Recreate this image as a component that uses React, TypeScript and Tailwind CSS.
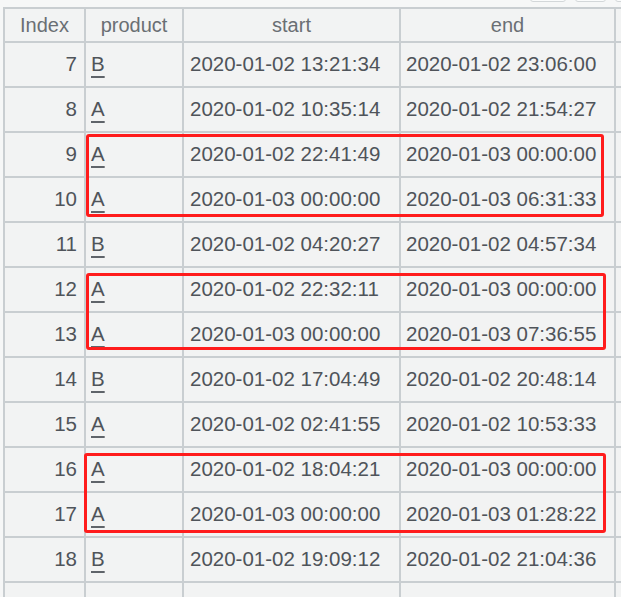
import React from "react";

const rows: [string, string, string, string][] = [
  ["7", "B", "2020-01-02 13:21:34", "2020-01-02 23:06:00"],
  ["8", "A", "2020-01-02 10:35:14", "2020-01-02 21:54:27"],
  ["9", "A", "2020-01-02 22:41:49", "2020-01-03 00:00:00"],
  ["10", "A", "2020-01-03 00:00:00", "2020-01-03 06:31:33"],
  ["11", "B", "2020-01-02 04:20:27", "2020-01-02 04:57:34"],
  ["12", "A", "2020-01-02 22:32:11", "2020-01-03 00:00:00"],
  ["13", "A", "2020-01-03 00:00:00", "2020-01-03 07:36:55"],
  ["14", "B", "2020-01-02 17:04:49", "2020-01-02 20:48:14"],
  ["15", "A", "2020-01-02 02:41:55", "2020-01-02 10:53:33"],
  ["16", "A", "2020-01-02 18:04:21", "2020-01-03 00:00:00"],
  ["17", "A", "2020-01-03 00:00:00", "2020-01-03 01:28:22"],
  ["18", "B", "2020-01-02 19:09:12", "2020-01-02 21:04:36"],
  ["19", "A", "2020-01-02 05:26:07", "2020-01-02 08:15:30"],
];

const cell = "bg-[#f2f3f3] flex items-center h-[43px] text-[20.5px] text-[#4f545a] leading-none whitespace-nowrap overflow-hidden";
const head = "bg-[#f2f3f3] flex items-center justify-center h-[32px] text-[20px] text-[#6a6f74] leading-none whitespace-nowrap";

export default function App() {
  return (
    <div
      className="relative w-[621px] h-[597px] overflow-hidden bg-[#f6f7f7]"
      style={{ fontFamily: '"Liberation Sans", Arial, sans-serif' }}
    >
      {/* toolbar buttons cut off at top */}
      <div className="absolute top-[-12px] left-[530px] flex gap-[9px]">
        <div className="w-[36px] h-[14px] rounded-[3px] border border-[#d3d7d9] bg-[#fafbfb]" />
        <div className="w-[31px] h-[14px] rounded-[3px] border border-[#d3d7d9] bg-[#fafbfb]" />
        <div className="w-[31px] h-[14px] rounded-[3px] border border-[#d3d7d9] bg-[#fafbfb]" />
      </div>

      <div className="pt-[7px] pl-[3px]">
        <div className="grid grid-cols-[79px_96px_215px_213px_120px] gap-[2px] p-[2px] bg-[#c9ced1] w-[740px]">
          <div className={head}>Index</div>
          <div className={head}>product</div>
          <div className={head}>start</div>
          <div className={head}>end</div>
          <div className={head}></div>
          {rows.map((r) => (
            <React.Fragment key={r[0]}>
              <div className={`${cell} justify-end pr-[7px]`}>{r[0]}</div>
              <div className={`${cell} pl-[5px]`}>
                <span className="underline decoration-[1.5px] underline-offset-[5px] decoration-[#5f646a]">{r[1]}</span>
              </div>
              <div className={`${cell} pl-[6px]`}>{r[2]}</div>
              <div className={`${cell} pl-[5px]`}>{r[3]}</div>
              <div className={cell}></div>
            </React.Fragment>
          ))}
        </div>
      </div>

      {/* highlight boxes */}
      <div className="absolute left-[86px] top-[134px] w-[518px] h-[83px] border-[3px] border-[#ff1c1c] rounded-[3px]" />
      <div className="absolute left-[86px] top-[273px] w-[520px] h-[77px] border-[3px] border-[#ff1c1c] rounded-[3px]" />
      <div className="absolute left-[84px] top-[453px] w-[522px] h-[80px] border-[3px] border-[#ff1c1c] rounded-[3px]" />
    </div>
  );
}
